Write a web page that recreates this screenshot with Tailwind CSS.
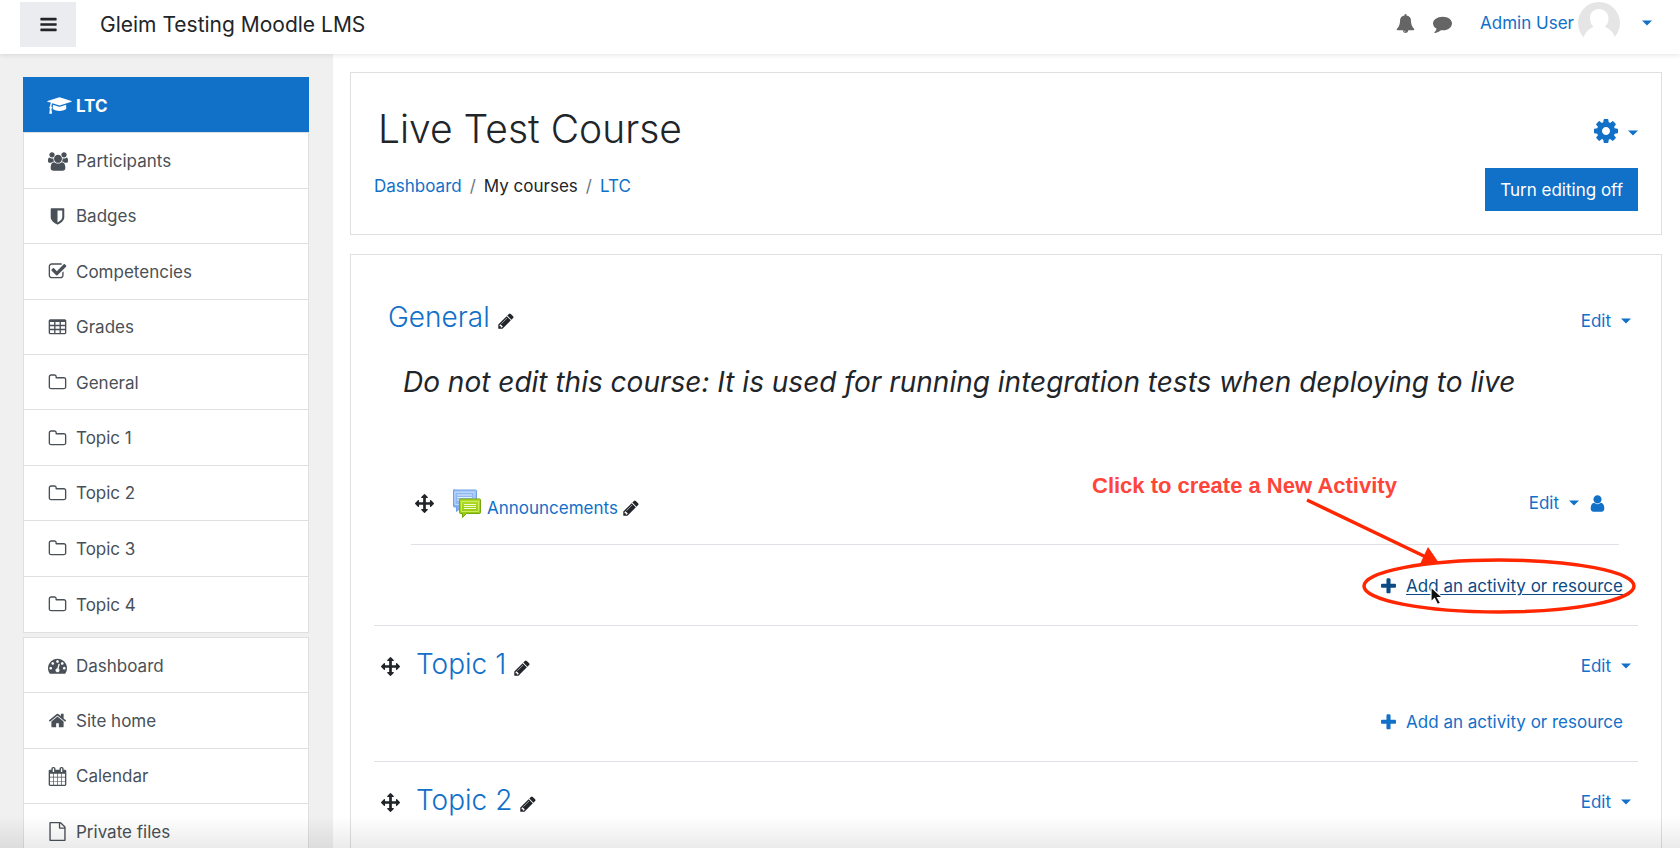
<!DOCTYPE html>
<html lang="en">
<head>
    <meta charset="UTF-8">
    <meta name="viewport" content="width=device-width, initial-scale=1.0">
    <title>Course: Live Test Course</title>
    <script src="https://cdn.jsdelivr.net/npm/@tailwindcss/browser@4"></script>
</head>
<body class="h-screen overflow-hidden flex flex-col bg-white text-[#212529] font-[Inter,'Liberation_Sans',sans-serif] text-[17px] leading-6">

    <!-- Icon sprite -->
    <svg class="hidden" aria-hidden="true">
        <symbol id="i-bars" viewBox="0 0 1792 1792"><path d="M1664 1344v128q0 26-19 45t-45 19h-1408q-26 0-45-19t-19-45v-128q0-26 19-45t45-19h1408q26 0 45 19t19 45zm0-512v128q0 26-19 45t-45 19h-1408q-26 0-45-19t-19-45v-128q0-26 19-45t45-19h1408q26 0 45 19t19 45zm0-512v128q0 26-19 45t-45 19h-1408q-26 0-45-19t-19-45v-128q0-26 19-45t45-19h1408q26 0 45 19t19 45z"/></symbol>
        <symbol id="i-bell" viewBox="0 0 1792 1792"><path d="M912 1696q0-16-16-16-59 0-101.5-42.5t-42.5-101.5q0-16-16-16t-16 16q0 73 51.5 124.5t124.5 51.5q16 0 16-16zm816-288q0 52-38 90t-90 38h-448q0 106-75 181t-181 75-181-75-75-181h-448q-52 0-90-38t-38-90q50-42 91-88t85-119.5 74.5-158.5 50-206 19.5-260q0-152 117-282.5t307-158.5q-8-19-8-39 0-40 28-68t68-28 68 28 28 68q0 20-8 39 190 28 307 158.5t117 282.5q0 139 19.5 260t50 206 74.5 158.5 85 119.5 91 88z"/></symbol>
        <symbol id="i-comment" viewBox="0 0 1792 1792"><path d="M1792 896q0 174-120 321.5t-326 233-450 85.5q-70 0-145-8-198 175-460 242-49 14-114 22-17 2-30.5-9t-17.5-29v-1q-3-4-.5-12t2-10 4.5-9.5l6-9 7-8.5 8-9q7-8 31-34.5t34.5-38 31-39.5 32.5-51 27-59 26-76q-157-89-247.5-220t-90.5-281q0-130 71-248.5t191-204.5 286-136.5 348-50.5q244 0 450 85.5t326 233 120 321.5z"/></symbol>
        <symbol id="i-cap" viewBox="0 0 2304 1792"><path d="M1774 836l18 316q4 69-82 128t-235 93.5-323 34.5-323-34.5-235-93.5-82-128l18-316 574 181q22 7 48 7t48-7zm530-324q0 23-22 31l-1120 352q-4 1-10 1t-10-1l-652-206q-43 34-71 111.5t-34 178.5q63 36 63 109 0 69-58 107l58 433q2 14-8 25-9 11-24 11h-192q-15 0-24-11-10-11-8-25l58-433q-58-38-58-107 0-73 65-111 11-207 98-330l-333-104q-22-8-22-31t22-31l1120-352q4-1 10-1t10 1l1120 352q22 8 22 31z"/></symbol>
        <symbol id="i-users" viewBox="0 0 1920 1792"><path d="M593 896q-162 5-265 128h-134q-82 0-138-40.5t-56-118.5q0-353 124-353 6 0 43.5 21t97.5 42.5 119 21.5q67 0 133-23-5 37-5 66 0 139 81 256zm1071 637q0 120-73 189.5t-194 69.5h-874q-121 0-194-69.5t-73-189.5q0-53 3.5-103.5t14-109 26.5-108.5 43-97.5 62-81 85.5-53.5 111.5-20q10 0 43 21.5t73 48 107 48 135 21.5 135-21.5 107-48 73-48 43-21.5q61 0 111.5 20t85.5 53.5 62 81 43 97.5 26.5 108.5 14 109 3.5 103.5zm-1024-1277q0 106-75 181t-181 75-181-75-75-181 75-181 181-75 181 75 75 181zm704 384q0 159-112.5 271.5t-271.5 112.5-271.5-112.5-112.5-271.5 112.5-271.5 271.5-112.5 271.5 112.5 112.5 271.5zm576 225q0 78-56 118.5t-138 40.5h-134q-103-123-265-128 81-117 81-256 0-29-5-66 66 23 133 23 59 0 119-21.5t97.5-42.5 43.5-21q124 0 124 353zm-128-609q0 106-75 181t-181 75-181-75-75-181 75-181 181-75 181 75 75 181z"/></symbol>
        <symbol id="i-shield" viewBox="0 0 1792 1792"><path d="M1344 960v-640h-448v1137q119-63 213-137 235-184 235-360zm192-768v768q0 86-33.5 170.5t-83 150-118 127.5-126.5 103-121 77.5-89.5 49.5-42.5 20q-12 6-26 6t-26-6q-16-7-42.5-20t-89.5-49.5-121-77.5-126.5-103-118-127.5-83-150-33.5-170.5v-768q0-26 19-45t45-19h1152q26 0 45 19t19 45z"/></symbol>
        <symbol id="i-check" viewBox="0 0 1792 1792"><path d="M1472 930v318q0 119-84.5 203.5t-203.5 84.5h-832q-119 0-203.5-84.5t-84.5-203.5v-832q0-119 84.5-203.5t203.5-84.5h832q63 0 117 25 15 7 18 23 3 17-9 29l-49 49q-10 10-23 10-3 0-9-2-23-6-45-6h-832q-66 0-113 47t-47 113v832q0 66 47 113t113 47h832q66 0 113-47t47-113v-254q0-13 9-22l64-64q10-10 23-10 6 0 12 3 20 8 20 29zm231-489l-814 814q-24 24-57 24t-57-24l-430-430q-24-24-24-57t24-57l110-110q24-24 57-24t57 24l263 263 647-647q24-24 57-24t57 24l110 110q24 24 24 57t-24 57z"/></symbol>
        <symbol id="i-table" viewBox="0 0 1792 1792"><path fill-rule="evenodd" d="M224 128h1344q66 0 113 47t47 113v1088q0 66-47 113t-113 47h-1344q-66 0-113-47t-47-113v-1088q0-66 47-113t113-47zM192 384h384v256h-384zM704 384h384v256h-384zM1216 384h384v256h-384zM192 768h384v256h-384zM704 768h384v256h-384zM1216 768h384v256h-384zM192 1152h384v256h-384zM704 1152h384v256h-384zM1216 1152h384v256h-384z"/></symbol>
        <symbol id="i-folder" viewBox="0 0 1792 1792"><path d="M1600 1312v-704q0-40-28-68t-68-28h-704q-40 0-68-28t-28-68v-64q0-40-28-68t-68-28h-320q-40 0-68 28t-28 68v960q0 40 28 68t68 28h1216q40 0 68-28t28-68zm128-704v704q0 92-66 158t-158 66h-1216q-92 0-158-66t-66-158v-960q0-92 66-158t158-66h320q92 0 158 66t66 158v32h672q92 0 158 66t66 158z"/></symbol>
        <symbol id="i-dash" viewBox="0 0 1792 1792"><path d="M384 1152q0-53-37.5-90.5t-90.5-37.5-90.5 37.5-37.5 90.5 37.5 90.5 90.5 37.5 90.5-37.5 37.5-90.5zm192-448q0-53-37.5-90.5t-90.5-37.5-90.5 37.5-37.5 90.5 37.5 90.5 90.5 37.5 90.5-37.5 37.5-90.5zm428 481l101-382q6-26-7.5-48.5t-38.5-29.5-48 6.5-30 39.5l-101 382q-60 5-107 43.5t-63 98.5q-20 77 20 146t117 89 146-20 89-117q16-60-6-117t-72-91zm660-33q0-53-37.5-90.5t-90.5-37.5-90.5 37.5-37.5 90.5 37.5 90.5 90.5 37.5 90.5-37.5 37.5-90.5zm-640-640q0-53-37.5-90.5t-90.5-37.5-90.5 37.5-37.5 90.5 37.5 90.5 90.5 37.5 90.5-37.5 37.5-90.5zm448 192q0-53-37.5-90.5t-90.5-37.5-90.5 37.5-37.5 90.5 37.5 90.5 90.5 37.5 90.5-37.5 37.5-90.5zm320 448q0 261-141 483-19 29-54 29h-1402q-35 0-54-29-141-221-141-483 0-182 71-348t191-286 286-191 348-71 348 71 286 191 191 286 71 348z"/></symbol>
        <symbol id="i-home" viewBox="0 0 1792 1792"><path d="M1472 992v480q0 26-19 45t-45 19h-384v-384h-256v384h-384q-26 0-45-19t-19-45v-480q0-1 .5-3t.5-3l575-474 575 474q1 2 1 6zm223-69l-62 74q-8 9-21 11h-3q-13 0-21-7l-692-577-692 577q-12 8-24 7-13-2-21-11l-62-74q-8-10-7-23.5t11-21.5l719-599q32-26 76-26t76 26l244 204v-195q0-14 9-23t23-9h192q14 0 23 9t9 23v408l219 182q10 8 11 21.5t-7 23.5z"/></symbol>
        <symbol id="i-calendar" viewBox="0 0 1792 1792"><path d="M192 1664h288v-288h-288v288zm352 0h320v-288h-320v288zm-352-352h288v-320h-288v320zm352 0h320v-320h-320v320zm-352-384h288v-288h-288v288zm736 736h320v-288h-320v288zm-384-736h320v-288h-320v288zm768 736h288v-288h-288v288zm-384-352h320v-320h-320v320zm-352-864v-288q0-13-9.5-22.5t-22.5-9.5h-64q-13 0-22.5 9.5t-9.5 22.5v288q0 13 9.5 22.5t22.5 9.5h64q13 0 22.5-9.5t9.5-22.5zm736 864h288v-320h-288v320zm-384-384h320v-288h-320v288zm384 0h288v-288h-288v288zm32-480v-288q0-13-9.5-22.5t-22.5-9.5h-64q-13 0-22.5 9.5t-9.5 22.5v288q0 13 9.5 22.5t22.5 9.5h64q13 0 22.5-9.5t9.5-22.5zm384-64v1280q0 52-38 90t-90 38h-1408q-52 0-90-38t-38-90v-1280q0-52 38-90t90-38h128v-96q0-66 47-113t113-47h64q66 0 113 47t47 113v96h384v-96q0-66 47-113t113-47h64q66 0 113 47t47 113v96h128q52 0 90 38t38 90z"/></symbol>
        <symbol id="i-file" viewBox="0 0 1792 1792"><path d="M1596 380q28 28 48 76t20 88v1152q0 40-28 68t-68 28h-1344q-40 0-68-28t-28-68v-1600q0-40 28-68t68-28h896q40 0 88 20t76 48zm-444-244v376h376q-10-29-22-41l-313-313q-12-12-41-22zm384 1528v-1024h-416q-40 0-68-28t-28-68v-416h-768v1536h1280z"/></symbol>
        <symbol id="i-cog" viewBox="0 0 1792 1792"><path d="M1152 896q0-106-75-181t-181-75-181 75-75 181 75 181 181 75 181-75 75-181zm512-109v222q0 12-8 23t-20 13l-185 28q-19 54-39 91 35 50 107 138 10 12 10 25t-9 23q-27 37-99 108t-94 71q-12 0-26-9l-138-108q-44 23-91 38-16 136-29 186-7 28-36 28h-222q-14 0-24.5-8.5t-11.5-21.5l-28-184q-49-16-90-37l-141 107q-10 9-25 9-14 0-25-11-126-114-165-168-7-10-7-23 0-12 8-23 15-21 51-66.5t54-70.5q-27-50-41-99l-183-27q-13-2-21-12.5t-8-23.5v-222q0-12 8-23t19-13l186-28q14-46 39-92-40-57-107-138-10-12-10-24 0-10 9-23 26-36 98.5-107.5t94.5-71.5q13 0 26 10l138 107q44-23 91-38 16-136 29-186 7-28 36-28h222q14 0 24.5 8.5t11.5 21.5l28 184q49 16 90 37l142-107q9-9 24-9 13 0 25 10 129 119 165 170 7 8 7 22 0 12-8 23-15 21-51 66.5t-54 70.5q26 50 41 98l183 28q13 2 21 12.5t8 23.5z"/></symbol>
        <symbol id="i-pencil" viewBox="0 0 1792 1792"><path d="M491 1536l91-91-235-235-91 91v107h128v128h107zm523-928q0-22-22-22-10 0-17 7l-542 542q-7 7-7 17 0 22 22 22 10 0 17-7l542-542q7-7 7-17zm-54-192l416 416-832 832h-416v-416zm683 96q0 53-37 90l-166 166-416-416 166-165q36-38 90-38 53 0 91 38l235 234q37 39 37 91z"/></symbol>
        <symbol id="i-arrows" viewBox="0 0 1792 1792"><path d="M1792 896q0 26-19 45l-256 256q-19 19-45 19t-45-19-19-45v-128h-384v384h128q26 0 45 19t19 45-19 45l-256 256q-19 19-45 19t-45-19l-256-256q-19-19-19-45t19-45 45-19h128v-384h-384v128q0 26-19 45t-45 19-45-19l-256-256q-19-19-19-45t19-45l256-256q19-19 45-19t45 19 19 45v128h384v-384h-128q-26 0-45-19t-19-45 19-45l256-256q19-19 45-19t45 19l256 256q19 19 19 45t-19 45-45 19h-128v384h384v-128q0-26 19-45t45-19 45 19l256 256q19 19 19 45z"/></symbol>
        <symbol id="i-user" viewBox="0 0 1792 1792"><path d="M1536 1399q0 109-62.5 187t-150.5 78h-854q-88 0-150.5-78t-62.5-187q0-85 8.5-160.5t31.5-152 58.5-131 94-89 134.5-34.5q131 128 313 128t313-128q76 0 134.5 34.5t94 89 58.5 131 31.5 152 8.5 160.5zm-256-887q0 159-112.5 271.5t-271.5 112.5-271.5-112.5-112.5-271.5 112.5-271.5 271.5-112.5 271.5 112.5 112.5 271.5z"/></symbol>
        <symbol id="i-plus" viewBox="0 0 1792 1792"><path d="M1600 736v192q0 40-28 68t-68 28h-416v416q0 40-28 68t-68 28h-192q-40 0-68-28t-28-68v-416h-416q-40 0-68-28t-28-68v-192q0-40 28-68t68-28h416v-416q0-40 28-68t68-28h192q40 0 68 28t28 68v416h416q40 0 68 28t28 68z"/></symbol>
        <symbol id="i-caret" viewBox="0 0 10 6"><path d="M0 0.500h10l-5 5z"/></symbol>
    </svg>

    <!-- Top bar -->
    <header class="relative z-10 shrink-0 h-[54px] flex items-start bg-white shadow-[0_2px_4px_rgba(0,0,0,0.08)] pl-5 pr-7">
        <button type="button" aria-label="Side panel" class="mt-[2px] w-[56px] h-[45px] flex items-center justify-center bg-[#ebecf0]">
            <svg class="size-[19px] fill-[#212529]"><use href="#i-bars"/></svg>
        </button>
        <a href="#" class="ml-6 mt-[9px] text-[21px] leading-8">Gleim Testing Moodle LMS</a>
        <div class="ml-auto flex items-center h-[46px]">
            <button type="button" aria-label="Notifications" class="mr-[18px]"><svg class="size-[19px] fill-[#656565]"><use href="#i-bell"/></svg></button>
            <button type="button" aria-label="Messages" class="mr-7"><svg class="size-[19px] fill-[#656565]"><use href="#i-comment"/></svg></button>
            <button type="button" class="flex items-center text-[#1170c8]">
                <span>Admin User</span>
                <svg class="ml-1 size-[42px]" viewBox="0 0 42 42">
                    <clipPath id="avatarClip"><path d="M0 0h42v36H0z"/></clipPath>
                    <g clip-path="url(#avatarClip)">
                        <circle cx="21" cy="21" r="21" fill="#e5e5e5"/>
                        <path fill="#fff" d="M21 7c5.500 0 9.500 4 9.500 9.500 0 3.500-1.300 6-3.500 8.500 4.500 1.800 8 5 9.500 9v4H6v-4c1.500-4 5-7.200 9.500-9-2.200-2.500-3.500-5-3.500-8.500C11.500 11 15.500 7 21 7z"/>
                    </g>
                </svg>
                <svg class="ml-[22px] w-[10px] h-[6px] fill-[#1170c8]"><use href="#i-caret"/></svg>
            </button>
        </div>
    </header>

    <div class="flex flex-1 min-h-0">
        <!-- Nav drawer -->
        <aside class="w-[333px] shrink-0 bg-[#f0f0f0] pt-[23px] pl-[23px] pr-6 overflow-hidden text-[#495057]">
            <nav class="grid auto-rows-fr h-[556px] border border-[#dfdfdf] bg-white divide-y divide-[#dfdfdf]">
                <a href="#" class="-mx-px -mt-px px-6 pt-0.5 flex items-center bg-[#1170c8] text-white font-bold"><svg class="w-[25px] h-[19px] mr-1 fill-white"><use href="#i-cap"/></svg>LTC</a>
                <a href="#" class="px-6 pt-px flex items-center"><svg class="w-[20px] h-[19px] mr-2 fill-[#495057]"><use href="#i-users"/></svg>Participants</a>
                <a href="#" class="px-6 pt-px flex items-center"><svg class="size-[19px] mr-[9px] fill-[#495057]"><use href="#i-shield"/></svg>Badges</a>
                <a href="#" class="px-6 pt-px flex items-center"><svg class="size-[19px] mr-[9px] fill-[#495057]"><use href="#i-check"/></svg>Competencies</a>
                <a href="#" class="px-6 pt-px flex items-center"><svg class="size-[19px] mr-[9px] fill-[#495057]"><use href="#i-table"/></svg>Grades</a>
                <a href="#" class="px-6 pt-px flex items-center"><svg class="size-[19px] mr-[9px] fill-[#495057]"><use href="#i-folder"/></svg>General</a>
                <a href="#" class="px-6 pt-px flex items-center"><svg class="size-[19px] mr-[9px] fill-[#495057]"><use href="#i-folder"/></svg>Topic 1</a>
                <a href="#" class="px-6 pt-px flex items-center"><svg class="size-[19px] mr-[9px] fill-[#495057]"><use href="#i-folder"/></svg>Topic 2</a>
                <a href="#" class="px-6 pt-px flex items-center"><svg class="size-[19px] mr-[9px] fill-[#495057]"><use href="#i-folder"/></svg>Topic 3</a>
                <a href="#" class="px-6 pt-px flex items-center"><svg class="size-[19px] mr-[9px] fill-[#495057]"><use href="#i-folder"/></svg>Topic 4</a>
            </nav>
            <nav class="mt-1 grid auto-rows-fr h-[223px] border border-[#dfdfdf] bg-white divide-y divide-[#dfdfdf]">
                <a href="#" class="px-6 pt-px flex items-center"><svg class="size-[19px] mr-[9px] fill-[#495057]"><use href="#i-dash"/></svg>Dashboard</a>
                <a href="#" class="px-6 pt-px flex items-center"><svg class="size-[19px] mr-[9px] fill-[#495057]"><use href="#i-home"/></svg>Site home</a>
                <a href="#" class="px-6 pt-px flex items-center"><svg class="size-[19px] mr-[9px] fill-[#495057]"><use href="#i-calendar"/></svg>Calendar</a>
                <a href="#" class="px-6 pt-px flex items-center"><svg class="size-[19px] mr-[9px] fill-[#495057]"><use href="#i-file"/></svg>Private files</a>
            </nav>
        </aside>

        <main class="flex-1 min-w-0 overflow-hidden pt-[18px] pl-[17px] pr-[18px]">
            <!-- Course header -->
            <section class="flex justify-between h-[163px] border border-[#dfdfdf] px-[23px]">
                <div>
                    <h1 class="mt-7 ml-1 text-[39px] leading-[56px] font-light">Live Test Course</h1>
                    <nav aria-label="Breadcrumb" class="mt-[17px] flex gap-2">
                        <a href="#" class="text-[#1170c8]">Dashboard</a>
                        <span class="text-[#6c757d]">/</span>
                        <span>My courses</span>
                        <span class="text-[#6c757d]">/</span>
                        <a href="#" class="text-[#1170c8]">LTC</a>
                    </nav>
                </div>
                <div class="flex flex-col items-end">
                    <button type="button" aria-label="Course settings" class="mt-[44px] flex items-center gap-2">
                        <svg class="size-[28px] fill-[#1170c8]"><use href="#i-cog"/></svg>
                        <svg class="mt-1 w-[10px] h-[6px] fill-[#1170c8]"><use href="#i-caret"/></svg>
                    </button>
                    <button type="button" class="mt-[23px] h-[43px] px-[15px] bg-[#1170c8] text-white">Turn editing off</button>
                </div>
            </section>

            <!-- Course content -->
            <section class="mt-[19px] border border-[#dfdfdf] px-[23px]">
                <div class="relative pt-[40px] h-[371px] border-b border-[#dee2e6]">
                    <div class="flex items-center h-12 pl-[14px] pr-[7px]">
                        <h2 class="pb-1 text-[28px] leading-10 font-light text-[#1170c8]"><a href="#">General</a></h2>
                        <button type="button" aria-label="Edit section name" class="ml-[7px] mt-1"><svg class="size-[18px] fill-[#212529]"><use href="#i-pencil"/></svg></button>
                        <button type="button" class="ml-auto mt-1 flex items-center gap-[10px] text-[#1170c8]">Edit<svg class="w-[10px] h-[6px] fill-[#1170c8]"><use href="#i-caret"/></svg></button>
                    </div>
                    <p class="mt-[19px] ml-[29px] text-[28px] leading-10 italic">Do not edit this course: It is used for running integration tests when deploying to live</p>

                    <div class="mt-[60px] ml-[37px] mr-[19px] h-[83px] flex items-center border-b border-[#dee2e6] pl-1 pr-3">
                        <svg class="size-[19px] fill-[#212529]"><use href="#i-arrows"/></svg>
                        <svg class="ml-[18px] size-[29px]" viewBox="0 0 29 29">
                            <defs>
                                <linearGradient id="blueFill" x1="0" y1="0" x2="0" y2="1"><stop offset="0" stop-color="#a9cbf8"/><stop offset="1" stop-color="#79a9ec"/></linearGradient>
                                <linearGradient id="greenFill" x1="0" y1="0" x2="0" y2="1"><stop offset="0" stop-color="#b4dd2c"/><stop offset="1" stop-color="#8cc60a"/></linearGradient>
                            </defs>
                            <path d="M1.500 1h22q1 0 1 1v15q0 1-1 1h-14l-5 4.500v-4.500h-2q-1 0-1-1V2q0-1 1-1z" fill="url(#blueFill)" stroke="#6f9fe6"/>
                            <path d="M3 3.500h19v12H3z" fill="#8fb8f2" stroke="#bcd7fb"/>
                            <path d="M5 6h15M5 8.500h15M5 11h15" stroke="#e3effe"/>
                            <path d="M8.500 10h19q1 0 1 1v12.500q0 1-1 1h-13l-4 4v-4h-2q-1 0-1-1V11q0-1 1-1z" fill="url(#greenFill)" stroke="#74a80c"/>
                            <path d="M9.500 12.500h17v10h-17z" fill="none" stroke="#cdeb5c"/>
                            <path d="M12 15.500h12M12 17.500h12M12 19.500h12" stroke="#f3fbd0"/>
                        </svg>
                        <a href="#" class="ml-[6px] mt-[10px] text-[#1170c8]">Announcements</a>
                        <button type="button" aria-label="Edit title" class="ml-1 mt-[10px]"><svg class="size-[18px] fill-[#212529]"><use href="#i-pencil"/></svg></button>
                        <button type="button" class="ml-auto flex items-center gap-[10px] text-[#1170c8]">Edit<svg class="w-[10px] h-[6px] fill-[#1170c8]"><use href="#i-caret"/></svg></button>
                        <button type="button" aria-label="Group mode" class="ml-[9px]"><svg class="size-[19px] fill-[#1170c8]"><use href="#i-user"/></svg></button>
                    </div>
                    <div class="mt-[29px] mr-[15px] flex justify-end">
                        <a href="#" class="flex items-center gap-2 text-[#0b4a85]"><svg class="size-[19px] fill-[#0b4a85]"><use href="#i-plus"/></svg><span class="underline underline-offset-2">Add an activity or resource</span></a>
                    </div>

                    <!-- Callout pointing at the add link -->
                    <div class="absolute right-0 bottom-0 w-[560px] h-[160px] pointer-events-none">
                        <p class="absolute left-[14px] top-[7px] font-['Liberation_Sans',sans-serif] font-bold text-[22px] leading-7 text-[#ff453a]">Click to create a New Activity</p>
                        <svg class="absolute left-0 top-0 w-[560px] h-[160px] overflow-visible" viewBox="0 0 560 160">
                            <path d="M229 35L350 93" stroke="#ff2600" stroke-width="3.500"/>
                            <path d="M350 82L361 98L342 99z" fill="#ff2600"/>
                            <ellipse cx="421" cy="121" rx="135" ry="26" fill="none" stroke="#ff2600" stroke-width="3.500"/>
                            <path d="M353 122v15l3.500-3.500 3 6 3-1.500-3-5.500h5z" fill="#111" stroke="#fff" stroke-width="1.200"/>
                        </svg>
                    </div>
                </div>

                <div class="h-[136px] border-b border-[#dee2e6] pt-4">
                    <div class="flex items-center h-12 pl-[7px] pr-[7px]">
                        <svg class="size-[19px] fill-[#212529]"><use href="#i-arrows"/></svg>
                        <h2 class="ml-4 pb-1 text-[28px] leading-10 font-light text-[#1170c8]"><a href="#">Topic 1</a></h2>
                        <button type="button" aria-label="Edit section name" class="ml-[7px] mt-1"><svg class="size-[18px] fill-[#212529]"><use href="#i-pencil"/></svg></button>
                        <button type="button" class="ml-auto flex items-center gap-[10px] text-[#1170c8]">Edit<svg class="w-[10px] h-[6px] fill-[#1170c8]"><use href="#i-caret"/></svg></button>
                    </div>
                    <div class="mt-5 mr-[15px] flex justify-end">
                        <a href="#" class="flex items-center gap-2 text-[#1170c8]"><svg class="size-[19px] fill-[#1170c8]"><use href="#i-plus"/></svg>Add an activity or resource</a>
                    </div>
                </div>

                <div class="h-[136px] pt-4">
                    <div class="flex items-center h-12 pl-[7px] pr-[7px]">
                        <svg class="size-[19px] fill-[#212529]"><use href="#i-arrows"/></svg>
                        <h2 class="ml-4 pb-1 text-[28px] leading-10 font-light text-[#1170c8]"><a href="#">Topic 2</a></h2>
                        <button type="button" aria-label="Edit section name" class="ml-[7px] mt-1"><svg class="size-[18px] fill-[#212529]"><use href="#i-pencil"/></svg></button>
                        <button type="button" class="ml-auto flex items-center gap-[10px] text-[#1170c8]">Edit<svg class="w-[10px] h-[6px] fill-[#1170c8]"><use href="#i-caret"/></svg></button>
                    </div>
                </div>
            </section>
        </main>
    </div>

    <!-- Fade along the bottom edge -->
    <div class="fixed inset-x-0 bottom-0 h-8 bg-linear-to-b from-transparent to-black/8 pointer-events-none"></div>
</body>
</html>
